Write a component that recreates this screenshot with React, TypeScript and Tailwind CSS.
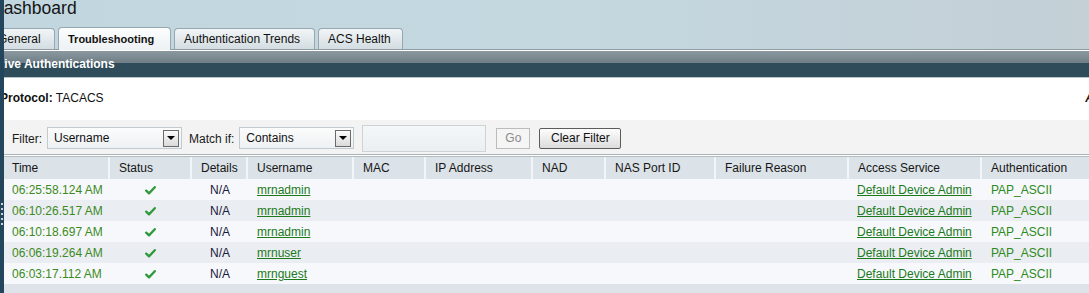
import React from "react";

type Row = {
    time: string;
    user: string;
};

const rows: Row[] = [
    { time: "06:25:58.124 AM", user: "mrnadmin" },
    { time: "06:10:26.517 AM", user: "mrnadmin" },
    { time: "06:10:18.697 AM", user: "mrnadmin" },
    { time: "06:06:19.264 AM", user: "mrnuser" },
    { time: "06:03:17.112 AM", user: "mrnguest" },
];

const columns = [
    "Time",
    "Status",
    "Details",
    "Username",
    "MAC",
    "IP Address",
    "NAD",
    "NAS Port ID",
    "Failure Reason",
    "Access Service",
    "Authentication",
];

const gridCols =
    "grid grid-cols-[106px_82px_56px_106px_72px_107px_73px_110px_133px_133px_1fr]";

function Check() {
    return (
        <svg width="11" height="9" viewBox="0 0 11 9" className="block">
            <path
                d="M1.2 4.6 L4 7.4 L9.8 1.2"
                fill="none"
                stroke="#2f9a3c"
                strokeWidth="2.3"
                strokeLinecap="round"
                strokeLinejoin="round"
            />
        </svg>
    );
}

function Select({ value, width }: { value: string; width: string }) {
    return (
        <div
            className={`flex h-[22px] items-center justify-between border border-[#c2cacf] bg-gradient-to-b from-[#fbfcfc] to-[#eef1f3] pl-[6px] pr-[2px] ${width}`}
        >
            <span className="leading-[14px] text-[#111]">{value}</span>
            <div className="flex h-[17px] w-[16px] items-center justify-center border border-[#6a6a6a] bg-gradient-to-b from-[#fbfbfb] to-[#dadada]">
                <div className="h-0 w-0 border-x-[4px] border-t-[4px] border-x-transparent border-t-black" />
            </div>
        </div>
    );
}

export default function App() {
    return (
        <div className="flex h-[293px] w-[1089px] overflow-hidden bg-white font-['Liberation_Sans',Arial,sans-serif] text-[12px]">
            {/* Left splitter strip */}
            <div className="flex w-[4px] shrink-0 flex-col items-center bg-[#24465c] pt-[203px]">
                {[0, 1, 2, 3, 4].map((i) => (
                    <span key={i} className="mb-[3px] h-[2px] w-[2px] bg-[#c9d3d9]" />
                ))}
            </div>

            <div className="flex min-w-0 flex-1 flex-col overflow-hidden">
                {/* Page title + tabs */}
                <div className="flex flex-col bg-gradient-to-r from-[#c2d6df] via-[#c4d8e0] to-[#c4cfd6]">
                    <div className="flex h-[27px] items-start">
                        <span className="-ml-[13px] -mt-[2px] block whitespace-nowrap text-[17.5px] leading-[20px] text-[#141414]">
                            Dashboard
                        </span>
                    </div>
                    <div className="-ml-[16px] flex h-[23px] items-end gap-[3px] border-b border-[#8e9da5]">
                        <div className="h-[21px] w-[67px] shrink-0 rounded-t-[4px] border border-b-0 border-[#97a7af] bg-gradient-to-b from-[#f2f5f7] to-[#d3dde2] pl-[9px] leading-[20px] text-[#111]">
                            General
                        </div>
                        <div className="relative z-10 -mb-px h-[23px] w-[113px] shrink-0 rounded-t-[4px] border border-b-0 border-[#97a7af] bg-gradient-to-b from-[#fcfdfd] to-[#edf2f4] pl-[9px] text-[11px] font-bold leading-[22px] text-[#111]">
                            Troubleshooting
                        </div>
                        <div className="h-[21px] w-[141px] shrink-0 rounded-t-[4px] border border-b-0 border-[#97a7af] bg-gradient-to-b from-[#f2f5f7] to-[#d3dde2] pl-[9px] leading-[20px] text-[#111]">
                            Authentication Trends
                        </div>
                        <div className="h-[21px] w-[85px] shrink-0 rounded-t-[4px] border border-b-0 border-[#97a7af] bg-gradient-to-b from-[#f2f5f7] to-[#d3dde2] pl-[9px] leading-[20px] text-[#111]">
                            ACS Health
                        </div>
                    </div>
                </div>
                <div className="h-px shrink-0 bg-white" />

                {/* Section header bar */}
                <div className="h-[27px] shrink-0 border-b border-[#b9c4c9] bg-[linear-gradient(to_bottom,#8b989f_0px,#6f7e86_12px,#2f4c5b_12px,#2f4c5b_100%)]">
                    <span className="-ml-[7px] block whitespace-nowrap pt-px font-bold leading-[25px] text-white">
                        Live Authentications
                    </span>
                </div>

                {/* Protocol */}
                <div className="flex h-[42px] shrink-0 items-start pt-[13px] leading-[14px]">
                    <span className="-ml-[4px] whitespace-nowrap text-[#111]">
                        <b>Protocol:</b> TACACS
                    </span>
                    <span className="-mr-[5px] ml-auto font-bold italic text-[#111]">A</span>
                </div>

                {/* Filter bar */}
                <div className="flex h-[34px] shrink-0 items-center bg-[#f3f3f3] pl-[8px] pt-[2px] text-[#1a1a1a]">
                    <span className="pt-px leading-[14px]">Filter:</span>
                    <div className="ml-[5px]">
                        <Select value="Username" width="w-[135px]" />
                    </div>
                    <span className="ml-[7px] pt-px leading-[14px]">Match if:</span>
                    <div className="ml-[5px]">
                        <Select value="Contains" width="w-[115px]" />
                    </div>
                    <div className="ml-[8px] h-[27px] w-[124px] border border-[#cdd3d6] bg-gradient-to-b from-[#f4f7f8] to-[#eceff1]" />
                    <button className="ml-[10px] h-[21px] w-[34px] border border-[#bcbcbc] bg-[#f5f5f5] leading-[14px] text-[#8a8a8a]">
                        Go
                    </button>
                    <button className="ml-[9px] h-[21px] w-[82px] rounded-[2px] border border-[#5c5c5c] bg-gradient-to-b from-[#fdfdfd] to-[#dcdcdc] leading-[14px] text-[#111]">
                        Clear Filter
                    </button>
                </div>
                <div className="h-px shrink-0 bg-[#a9b3b9]" />
                <div className="h-px shrink-0 bg-white" />
                <div className="h-px shrink-0 bg-[#b3bcc1]" />

                {/* Table */}
                <div className="flex-1 bg-[#dde3e8]">
                    <div className={`${gridCols} h-[22px] bg-[#dbe2e8] leading-[21px] text-[#161616]`}>
                        {columns.map((c, i) => (
                            <div
                                key={c}
                                className={`whitespace-nowrap pt-px ${i === 0 ? "pl-[8px]" : "pl-[9px]"} ${i < columns.length - 1 ? "border-r-2 border-[#f3f6f8]" : ""}`}
                            >
                                {c}
                            </div>
                        ))}
                    </div>
                    {rows.map((r, idx) => (
                        <div
                            key={idx}
                            className={`${gridCols} h-[21px] pt-px leading-[20px] ${idx % 2 === 0 ? "bg-[#f6f8fb]" : "bg-[#eaedf1]"}`}
                        >
                            <div className="whitespace-nowrap pl-[8px] text-[#3d8a22]">{r.time}</div>
                            <div className="flex items-center justify-center pr-[2px]">
                                <Check />
                            </div>
                            <div className="text-center text-[#1a1a3c]">N/A</div>
                            <div className="pl-[9px]">
                                <span className="text-[#1c7a1c] underline">{r.user}</span>
                            </div>
                            <div />
                            <div />
                            <div />
                            <div />
                            <div />
                            <div className="whitespace-nowrap pl-[8px]">
                                <span className="text-[#1c7a1c] underline">Default Device Admin</span>
                            </div>
                            <div className="pl-[9px] text-[#2e8a22]">PAP_ASCII</div>
                        </div>
                    ))}
                </div>
            </div>
        </div>
    );
}
